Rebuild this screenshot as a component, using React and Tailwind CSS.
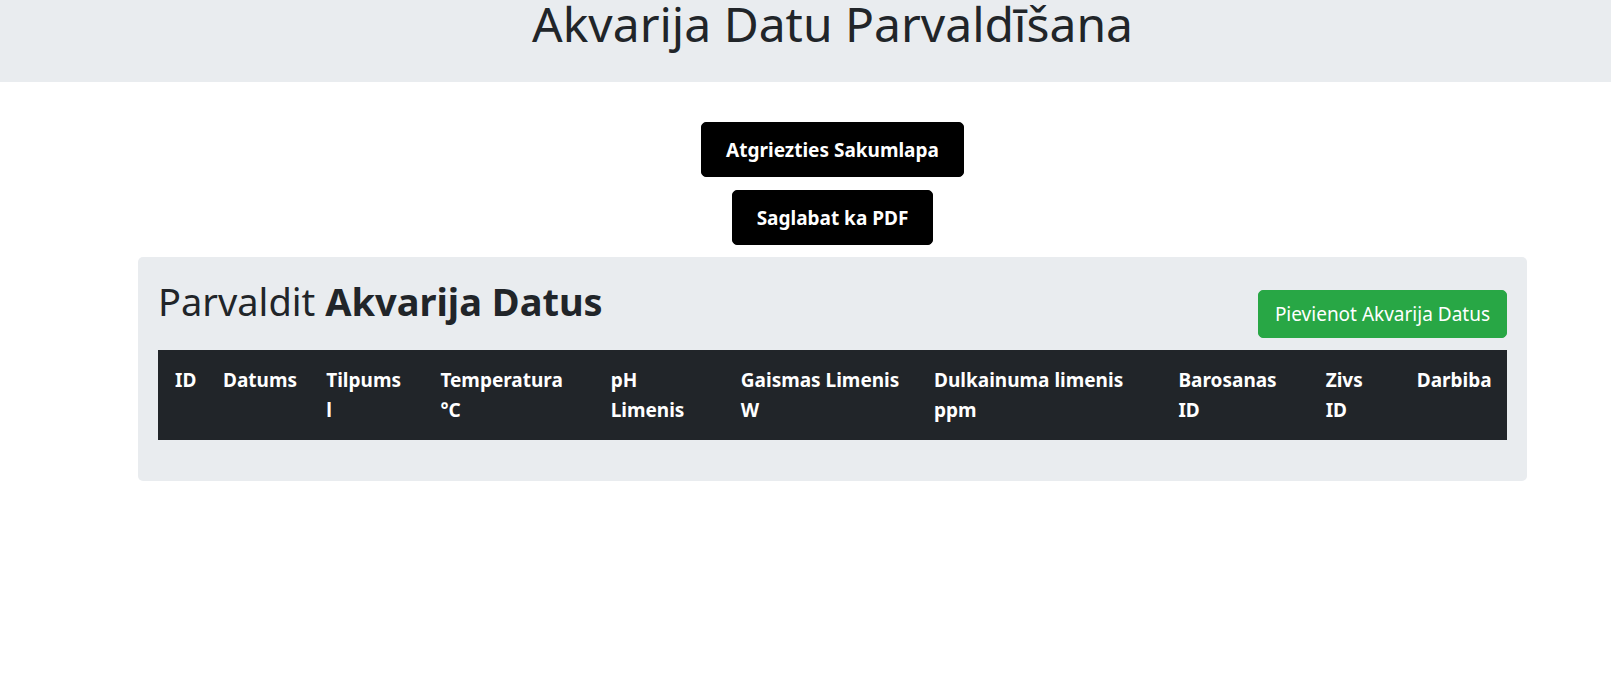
import React from 'react';

const columns = [
    { w: 'w-[53px] pl-[17px]', label: ['ID'] },
    { w: 'w-[103px]', label: ['Datums'] },
    { w: 'w-[114px]', label: ['Tilpums', 'l'] },
    { w: 'w-[170px]', label: ['Temperatura', '°C'] },
    { w: 'w-[130px]', label: ['pH', 'Limenis'] },
    { w: 'w-[193px]', label: ['Gaismas Limenis', 'W'] },
    { w: 'w-[244px]', label: ['Dulkainuma limenis', 'ppm'] },
    { w: 'w-[147px]', label: ['Barosanas', 'ID'] },
    { w: 'w-[91px]', label: ['Zivs', 'ID'] },
    { w: 'w-[102px]', label: ['Darbiba'] },
];

const App = () => {
    return (
        <div className="w-full overflow-hidden bg-white min-h-screen" style={{ fontFamily: "'Noto Sans', 'Open Sans', sans-serif" }}>
            <div className="w-[1665px] text-[#212529]">
                {/* page header */}
                <header className="h-[82px] bg-[#e9ecef] overflow-hidden">
                    <h1 className="text-center text-[48px] leading-[1.2] font-normal mt-[-5px]">Akvarija Datu Parvaldīšana</h1>
                </header>

                <div className="flex flex-col items-center gap-[13px] mt-10">
                    <button className="h-[55px] bg-black text-white font-bold text-[19px] leading-[30px] px-6 border border-black rounded-[5px]">Atgriezties Sakumlapa</button>
                    <button className="h-[55px] bg-black text-white font-bold text-[19px] leading-[30px] px-6 border border-black rounded-[5px]">Saglabat ka PDF</button>
                </div>

                <div className="w-[1389px] mx-auto mt-3 bg-[#e9ecef] rounded-[5px] p-5 pb-[21px]">
                    <div className="flex justify-between items-start mb-3">
                        <h2 className="text-[38px] leading-[48px] font-normal">Parvaldit <b className="font-bold">Akvarija Datus</b></h2>
                        <button className="mt-[13px] bg-[#28a745] text-white text-[19px] leading-[30px] px-4 py-2 border border-[#28a745] rounded-[5px]">Pievienot Akvarija Datus</button>
                    </div>

                    <table className="w-full table-fixed border-collapse mb-5">
                        <thead>
                            <tr className="bg-[#212529] text-white">
                                {columns.map((c, i) => (
                                    <th key={i} className={`${c.w} px-3 py-[15px] text-left align-top font-bold text-[19px] leading-[30px]`}>
                                        {c.label.map((l, j) => (
                                            <div key={j}>{l}</div>
                                        ))}
                                    </th>
                                ))}
                            </tr>
                        </thead>
                        <tbody></tbody>
                    </table>
                </div>
            </div>
        </div>
    );
};

export default App;
